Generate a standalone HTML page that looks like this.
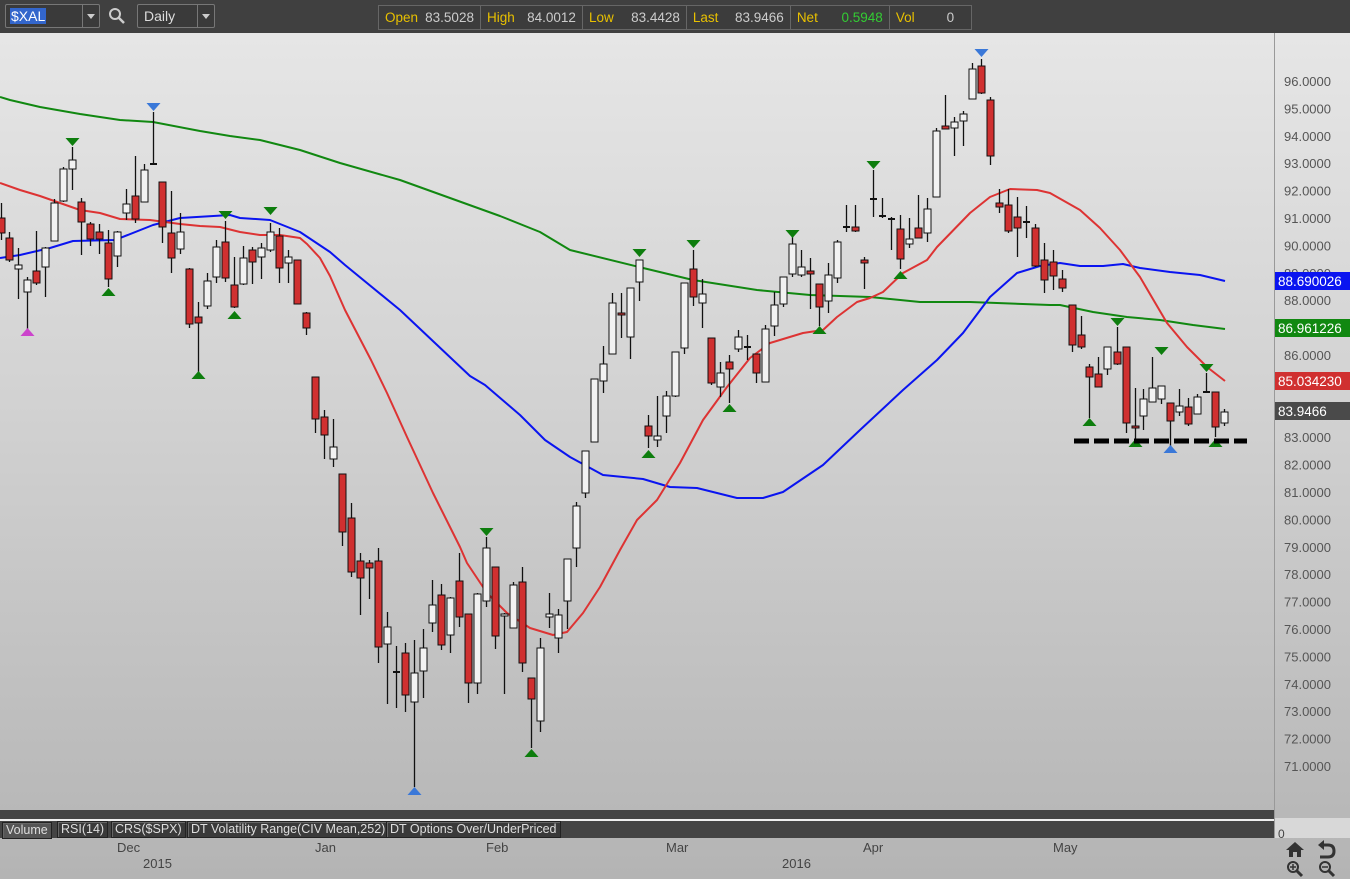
<!DOCTYPE html>
<html><head><meta charset="utf-8"><style>
html,body{margin:0;padding:0;width:1350px;height:879px;overflow:hidden;font-family:"Liberation Sans",sans-serif}
#bg{position:absolute;left:0;top:0;width:1350px;height:879px;background:linear-gradient(#e6e6e6 33px,#d2d2d2 400px,#b4b4b4 879px)}
#top{position:absolute;left:0;top:0;width:1350px;height:33px;background:#404040}
.box{position:absolute;border:1px solid #777;border-radius:2px;background:#3a3a3a;color:#ddd;font-size:14px}
#quote{position:absolute;left:378px;top:5px;width:592px;height:23px;border:1px solid #666;background:#3c3c3c;display:flex;font-size:13.5px}
#quote div{border-right:1px solid #666;display:flex;align-items:center;padding:0 6px;white-space:nowrap}
.y{color:#e8c000}.w{color:#ccc}.g{color:#3c3}
#svg{position:absolute;left:0;top:0}
.tab{position:absolute;top:821px;height:15px;background:#3a3a3a;border:1px solid #222;color:#ddd;font-size:12.5px;line-height:15px;padding:0 3px;box-shadow:inset 1px 1px #666}
.dl{position:absolute;font-size:13px;color:#444}
</style></head><body>
<div id="bg"></div>
<div id="top">
 <div class="box" style="left:5px;top:4px;width:93px;height:22px">
  <span style="position:absolute;left:4px;top:3px;background:#3366cc;color:#fff;font-size:14px;line-height:16px;padding:0 1px">$XAL</span>
  <span style="position:absolute;left:76px;top:0;width:1px;height:22px;background:#777"></span>
  <span style="position:absolute;left:81px;top:9px;border-left:4px solid transparent;border-right:4px solid transparent;border-top:5px solid #ccc"></span>
 </div>
 <svg style="position:absolute;left:108px;top:7px" width="18" height="18"><circle cx="7" cy="7" r="5" fill="none" stroke="#ccc" stroke-width="2"/><line x1="11" y1="11" x2="16" y2="16" stroke="#ccc" stroke-width="2.5"/></svg>
 <div class="box" style="left:137px;top:4px;width:76px;height:22px">
  <span style="position:absolute;left:6px;top:3px">Daily</span>
  <span style="position:absolute;left:59px;top:0;width:1px;height:22px;background:#777"></span>
  <span style="position:absolute;left:64px;top:9px;border-left:4px solid transparent;border-right:4px solid transparent;border-top:5px solid #ccc"></span>
 </div>
 <div id="quote">
  <div style="width:90px;justify-content:space-between"><span class="y">Open</span><span class="w">83.5028</span></div>
  <div style="width:90px;justify-content:space-between"><span class="y">High</span><span class="w">84.0012</span></div>
  <div style="width:92px;justify-content:space-between"><span class="y">Low</span><span class="w">83.4428</span></div>
  <div style="width:92px;justify-content:space-between"><span class="y">Last</span><span class="w">83.9466</span></div>
  <div style="width:87px;justify-content:space-between"><span class="y">Net</span><span class="g">0.5948</span></div>
  <div style="width:70px;border:none"><span class="y">Vol</span><span class="w" style="margin-left:32px">0</span></div>
 </div>
</div>
<svg id="svg" width="1350" height="879" xmlns="http://www.w3.org/2000/svg"></svg>
<div class="tab" style="left:2px;background:#555;top:822px">Volume</div>
<div class="tab" style="left:57px">RSI(14)</div>
<div class="tab" style="left:111px">CRS($SPX)</div>
<div class="tab" style="left:187px">DT Volatility Range(CIV Mean,252)</div>
<div class="tab" style="left:386px">DT Options Over/UnderPriced</div>
<div class="dl" style="left:117px;top:840px">Dec</div>
<div class="dl" style="left:143px;top:856px">2015</div>
<div class="dl" style="left:315px;top:840px">Jan</div>
<div class="dl" style="left:486px;top:840px">Feb</div>
<div class="dl" style="left:666px;top:840px">Mar</div>
<div class="dl" style="left:782px;top:856px">2016</div>
<div class="dl" style="left:863px;top:840px">Apr</div>
<div class="dl" style="left:1053px;top:840px">May</div>
<div class="dl" style="left:1278px;top:827px;font-size:12px">0</div>
<script>
var s=document.getElementById('svg'),h='';
h+='<rect x="0" y="810" width="1274" height="9" fill="#444"/><rect x="0" y="819" width="1274" height="2" fill="#eee"/><rect x="0" y="821" width="1274" height="17" fill="#444"/>';
h+='<rect x="1274" y="818" width="76" height="20" fill="#d8d8d8"/>';
h+='<line x1="1274.5" y1="33" x2="1274.5" y2="838" stroke="#999"/>';
// axis labels
for(var p=96;p>=71;p--){var y=81+(96-p)*27.4;h+='<text x="1284" y="'+(y+5)+'" font-size="13" fill="#555" font-family="Liberation Sans">'+p+'.0000</text>';}
// MAs
function pl(pts,c){h+='<polyline fill="none" stroke="'+c+'" stroke-width="2" stroke-linejoin="round" points="'+pts+'"/>';}
pl("0,97 10,100 40,107 80,114 120,120 153,122 200,131 230,136 260,140 300,150 340,163 400,180 450,198 500,216 540,232 570,250 639,267 693,280 757,290 810,295 870,297 920,302 970,302 1050,305 1060,305 1093,312 1127,317 1160,320 1193,325 1225,329","#118811");
pl("0,258 20,255 50,248 73,241 115,240 153,225 180,218 230,215 240,218 270,220 300,232 330,252 345,265 400,310 453,360 470,376 485,385 520,415 545,440 570,457 603,475 643,479 670,487 697,488 737,498 763,498 783,492 823,465 860,430 903,390 937,360 963,333 990,297 1017,273 1040,266 1060,263 1080,266 1103,266 1123,264 1140,268 1170,272 1200,275 1225,281","#0a14f0");
pl("0,183 20,190 40,196 60,203 80,210 100,213 120,219 150,220 180,224 200,226 220,227 240,232 260,235 280,235 300,238 307,244 320,258 330,276 345,310 371,360 387,393 407,437 433,493 460,547 467,563 487,593 507,613 530,628 553,635 567,632 583,613 600,587 620,550 637,520 657,500 680,463 703,420 727,387 750,358 770,343 803,333 823,330 837,317 857,302 870,298 883,292 903,273 927,260 937,247 970,213 990,197 1010,189 1037,190 1050,193 1080,210 1100,228 1120,250 1140,277 1167,323 1187,347 1207,367 1225,381","#dd3333");
// candles x,hi,lo,top,bot,color
var C=[[1,203,240,218,233,'r'],[9,232,262,238,260,'r'],[18,248,299,265,269,'w'],[27,277,330,280,292,'w'],[36,231,285,271,283,'r'],[45,247,297,248,267,'w'],[54,199,241,203,241,'w'],[63,167,202,169,201,'w'],[72,147,190,160,169,'w'],[81,198,255,202,222,'r'],[90,222,246,224,239,'r'],[99,224,254,232,239,'r'],[108,230,287,243,279,'r'],[117,231,267,232,256,'w'],[126,189,220,204,213,'w'],[135,156,223,196,219,'r'],[144,164,202,170,202,'w'],[153,112,165,163,164,'d'],[162,182,243,182,227,'r'],[171,191,273,233,258,'r'],[180,213,254,232,249,'w'],[189,268,328,269,324,'r'],[198,302,372,317,323,'r'],[207,273,309,281,306,'w'],[216,240,283,247,277,'w'],[225,221,282,242,278,'r'],[234,257,308,285,307,'r'],[243,246,285,258,284,'w'],[252,247,284,250,262,'r'],[261,243,279,248,257,'w'],[270,223,252,232,250,'w'],[279,228,283,236,268,'r'],[288,250,283,257,263,'w'],[297,260,304,260,304,'r'],[306,312,335,313,328,'r'],
[315,377,433,377,419,'r'],[324,410,459,417,435,'r'],[333,419,467,447,459,'w'],[342,474,546,474,532,'r'],[351,503,577,518,572,'r'],[360,553,615,561,578,'r'],[369,560,599,563,568,'r'],[378,548,663,561,647,'r'],[387,612,704,627,644,'w'],[396,646,708,671,673,'d'],[405,643,712,653,695,'r'],[414,640,787,673,702,'w'],[423,629,698,648,671,'w'],[432,580,632,605,623,'w'],[441,584,650,595,645,'r'],[450,597,653,598,635,'w'],[459,553,627,581,617,'r'],[468,614,703,614,683,'r'],[477,593,694,594,683,'w'],[486,537,607,548,601,'w'],[495,567,649,567,636,'r'],[504,613,694,614,616,'w'],[513,582,628,585,628,'w'],[522,567,672,582,663,'r'],[531,678,748,678,699,'r'],[540,638,732,648,721,'w'],[549,593,628,614,617,'w'],[558,609,653,615,638,'w'],[567,559,629,559,601,'w'],[576,502,567,506,548,'w'],[585,451,498,451,493,'w'],[594,379,442,379,442,'w'],
[603,346,393,364,381,'w'],[612,293,354,303,354,'w'],[621,293,338,313,315,'r'],[630,288,359,288,337,'w'],[639,260,301,260,282,'w'],[648,415,448,426,436,'r'],[657,396,447,436,440,'w'],[666,391,433,396,416,'w'],[675,352,397,352,396,'w'],[684,283,354,283,348,'w'],[693,250,306,269,297,'r'],[702,279,328,294,303,'w'],[711,338,385,338,383,'r'],[720,362,397,373,387,'w'],[729,355,403,362,369,'r'],[738,330,352,337,349,'w'],[747,335,360,346,348,'d'],[756,354,383,354,373,'r'],[765,325,382,329,382,'w'],[774,292,336,305,326,'w'],[783,277,307,277,304,'w'],[792,232,277,244,274,'w'],[801,250,277,267,275,'w'],[810,258,309,271,274,'r'],[819,284,326,284,307,'r'],[828,263,313,275,301,'w'],[837,240,283,242,278,'w'],[846,205,232,226,228,'d'],[855,205,232,227,231,'r'],[864,257,289,260,263,'r'],[873,170,217,198,200,'d'],[882,198,218,215,217,'d'],[891,217,250,218,220,'d'],[900,215,269,229,259,'r'],[909,218,248,239,244,'w'],[918,195,238,228,238,'r'],[927,198,242,209,233,'w'],[936,128,197,131,197,'w'],[945,95,129,126,129,'r'],[954,117,156,122,128,'w'],[963,111,146,114,121,'w'],[972,63,99,69,99,'w'],[981,59,94,66,93,'r'],[990,97,165,100,156,'r'],[999,189,213,203,207,'r'],[1008,189,233,205,231,'r'],[1017,197,257,217,228,'r'],[1026,206,238,221,222,'d'],[1035,224,267,228,266,'r'],[1044,243,293,260,280,'r'],[1053,250,290,262,276,'r'],[1062,270,292,279,288,'r'],[1072,305,352,305,345,'r'],[1081,316,349,335,347,'r'],[1089,364,418,367,377,'r'],[1098,357,387,374,387,'r'],[1107,347,375,347,369,'w'],[1117,327,365,352,364,'r'],[1126,347,433,347,423,'r'],[1135,388,445,426,428,'r'],[1143,389,430,399,416,'w'],[1152,357,402,388,402,'w'],[1161,386,404,386,399,'w'],[1170,403,450,403,421,'r'],[1179,389,416,406,412,'w'],[1188,398,426,407,424,'r'],[1197,394,414,397,414,'w'],[1206,373,392,391,393,'d'],[1215,392,437,392,427,'r'],[1224,409,426,412,423,'w']];
C.forEach(function(c){var x=c[0]+0.5;h+='<line x1="'+x+'" y1="'+c[1]+'" x2="'+x+'" y2="'+c[2]+'" stroke="#111" stroke-width="1.3"/>';
 var t=c[3],b=Math.max(c[4],t+2);
 if(c[5]=='d'){h+='<rect x="'+(x-3.5)+'" y="'+t+'" width="7" height="2" fill="#111"/>';}
 else h+='<rect x="'+(x-3.5)+'" y="'+t+'" width="7" height="'+(b-t)+'" fill="'+(c[5]=='r'?'#d03030':'#f2f2f2')+'" stroke="#111" stroke-width="1"/>';});
// markers
function tri(x,y,up,col){x+=0.5;if(up)h+='<polygon points="'+(x-7)+','+(y+4)+' '+(x+7)+','+(y+4)+' '+x+','+(y-4)+'" fill="'+col+'"/>';else h+='<polygon points="'+(x-7)+','+(y-4)+' '+(x+7)+','+(y-4)+' '+x+','+(y+4)+'" fill="'+col+'"/>';}
var G='#0d7d0d',B='#3a78d8';
[[72,142],[225,215],[270,211],[486,532],[639,253],[693,244],[792,234],[873,165],[1117,322],[1161,351],[1206,368]].forEach(function(p){tri(p[0],p[1],0,G)});
[[153,107],[981,53]].forEach(function(p){tri(p[0],p[1],0,B)});
[[108,292],[198,375],[234,315],[531,753],[648,454],[729,408],[819,330],[900,275],[1089,422],[1135,443],[1215,443]].forEach(function(p){tri(p[0],p[1],1,G)});
[[414,791],[1170,449]].forEach(function(p){tri(p[0],p[1],1,B)});
tri(27,332,1,'#cc44cc');
h+='<line x1="1074" y1="441" x2="1247" y2="441" stroke="#000" stroke-width="5" stroke-dasharray="15,5"/>';
// price labels
function lab(y,t,bg){h+='<rect x="1275" y="'+(y-9)+'" width="75" height="18" fill="'+bg+'"/><text x="1278" y="'+(y+5)+'" font-size="13.5" fill="#fff" font-family="Liberation Sans">'+t+'</text>';}
lab(281,'88.690026','#0a14f0');lab(328,'86.961226','#118811');lab(381,'85.034230','#d03030');lab(411,'83.9466','#4a4a4a');
// icons
h+='<path d="M1286 850 L1295 842 L1304 850 L1301 850 L1301 857 L1297 857 L1297 852 L1293 852 L1293 857 L1289 857 L1289 850Z" fill="#333"/>';
h+='<path d="M1322 845 L1328 845 Q1334 845 1334 851 Q1334 857 1328 857 L1320 857" fill="none" stroke="#333" stroke-width="3"/><polygon points="1318,845 1324,840 1324,850" fill="#333"/>';
h+='<circle cx="1293" cy="867" r="5" fill="none" stroke="#333" stroke-width="2"/><line x1="1297" y1="871" x2="1302" y2="876" stroke="#333" stroke-width="3"/><path d="M1290 867h6M1293 864v6" stroke="#333" stroke-width="1.5"/>';
h+='<circle cx="1325" cy="867" r="5" fill="none" stroke="#333" stroke-width="2"/><line x1="1329" y1="871" x2="1334" y2="876" stroke="#333" stroke-width="3"/><path d="M1322 867h6" stroke="#333" stroke-width="1.5"/>';
s.innerHTML=h;
</script>
</body></html>
